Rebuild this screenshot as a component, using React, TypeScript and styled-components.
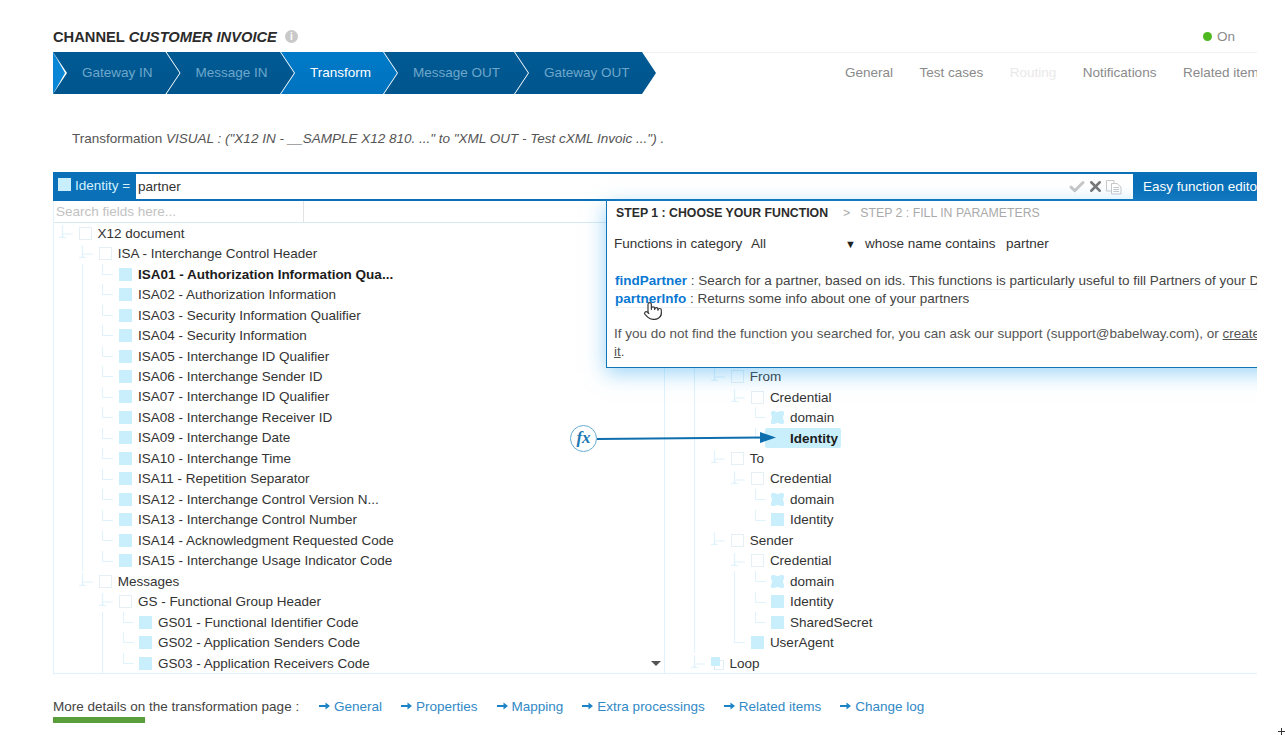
import React from "react";
import styled, { createGlobalStyle } from "styled-components";
import { Check, X, Pointer } from "lucide-react";

const GlobalStyle = createGlobalStyle`
  html, body {
    margin: 0;
    background: #fff;
    overflow: hidden;
  }
  body {
    font-family: "Liberation Sans", Arial, sans-serif;
    color: #333;
  }
`;

const ROW = 20.48;
const PALE = "#e0f2fc";
const CELL = "#c9effd";

const Page = styled.div`
  width: 1204px;
  height: 735px;
  margin-left: 53px;
  overflow: hidden;
`;

// header
const TitleBar = styled.div`
  display: flex;
  align-items: center;
  height: 52px;
  padding-top: 21px;
  box-sizing: border-box;
`;

const Title = styled.h1`
  margin: 0;
  font-size: 14.7px;
  font-weight: bold;
  color: #2b2b2b;
  line-height: 30px;

  em {
    font-weight: bold;
  }
`;

const InfoDot = styled.span`
  width: 13px;
  height: 13px;
  margin-left: 8px;
  border-radius: 50%;
  background: #c9c9c9;
  color: #fff;
  font-size: 10px;
  font-weight: bold;
  line-height: 13px;
  text-align: center;
`;

const Status = styled.div`
  display: flex;
  align-items: center;
  gap: 5px;
  margin-left: auto;
  margin-right: 22px;
  font-size: 13.5px;
  color: #8c8c8c;
`;

const StatusDot = styled.span`
  width: 9px;
  height: 9px;
  border-radius: 50%;
  background: #4fb81f;
`;

// steps
const NavRow = styled.div`
  display: flex;
  align-items: center;
  justify-content: space-between;
  height: 42px;
  box-shadow: inset 0 1px 0 #f1f1f1;
`;

const Steps = styled.div`
  display: flex;
  height: 42px;
`;

const StepTip = styled.div`
  width: 12px;
  margin-right: -12px;
  background: #0a86d6;
  clip-path: polygon(0 0, 100% 50%, 0 100%);
`;

const Step = styled.div<{ $w: number; $active?: boolean }>`
  width: ${({ $w }) => $w}px;
  margin-right: -13px;
  padding-left: 29px;
  box-sizing: border-box;
  font-size: 13.5px;
  line-height: 41px;
  white-space: nowrap;
  color: ${({ $active }) => ($active ? "#fff" : "#6ea7cb")};
  background: ${({ $active }) =>
    $active
      ? "linear-gradient(#007ac8, #0073bf)"
      : "linear-gradient(#005a94, #00558d)"};
  clip-path: polygon(
    0 0,
    calc(100% - 14px) 0,
    100% 50%,
    calc(100% - 14px) 100%,
    0 100%,
    14px 50%
  );
`;

const SideNav = styled.div`
  display: flex;
  gap: 26.5px;
  margin-top: -2px;
  font-size: 13.5px;
  color: #8a8a8a;
  width: 412px;
  white-space: nowrap;
  overflow: hidden;
`;

const SideLink = styled.span<{ $off?: boolean }>`
  color: ${({ $off }) => ($off ? "#e9e9e9" : "#8a8a8a")};
`;

const Summary = styled.p`
  margin: 36px 0 25px 19px;
  font-size: 13.5px;
  line-height: 17px;
  color: #555;
`;

// formula bar
const FormulaBar = styled.div`
  display: flex;
  height: 29px;
  background: #0a70b8;
  padding: 2px 0;
  box-sizing: border-box;
`;

const FieldTag = styled.div`
  display: flex;
  align-items: center;
  width: 83px;
  padding-left: 5px;
  box-sizing: border-box;
  gap: 4px;
  font-size: 13.5px;
  color: #d3f1fd;
  margin-top: -2px;
`;

const TagSquare = styled.span`
  width: 13px;
  height: 13px;
  margin-top: -2px;
  background: ${CELL};
`;

const FormulaInput = styled.div`
  display: flex;
  align-items: center;
  flex: 1;
  background: #fff;
  padding-left: 2px;
  font-size: 13.5px;
  color: #333;
`;

const InputTools = styled.div`
  display: flex;
  align-items: center;
  gap: 1px;
  margin-left: auto;
  margin-right: 10px;
`;

const EasyButton = styled.div`
  width: 124px;
  padding-left: 10px;
  box-sizing: border-box;
  font-size: 13.5px;
  line-height: 25px;
  color: #fff;
  white-space: nowrap;
  overflow: hidden;
`;

// mapping panel
const Panel = styled.div`
  position: relative;
  height: 473px;
  box-sizing: border-box;
  border-left: 1px solid ${PALE};
  border-bottom: 1px solid ${PALE};
`;

const SearchRow = styled.div`
  height: 22px;
  box-sizing: border-box;
  border-bottom: 1px solid #d9e8f1;
`;

const SearchBox = styled.div`
  width: 250px;
  height: 21px;
  padding-left: 2px;
  box-sizing: border-box;
  border-right: 1px solid #e3e3e3;
  font-size: 13.5px;
  line-height: 21px;
  color: #c2c2c2;
`;

const Panes = styled.div`
  display: flex;
  height: 450px;
  overflow: hidden;
`;

const LeftPane = styled.div`
  width: 610px;
  padding-left: 4px;
  box-sizing: border-box;
  flex-shrink: 0;
`;

const RightPane = styled.div`
  flex: 1;
  padding-left: 25px;
  /* first rows of this tree sit behind the function popup */
  padding-top: ${ROW * 7}px;
  box-sizing: border-box;
  border-left: 1px solid ${PALE};
`;

const Row = styled.div`
  display: flex;
  align-items: center;
  height: ${ROW}px;
  font-size: 13.5px;
  white-space: nowrap;
`;

const GuideCell = styled.span<{ $on: boolean }>`
  width: 20.2px;
  height: 100%;
  flex-shrink: 0;
  background: ${({ $on }) =>
    $on
      ? `linear-gradient(${PALE}, ${PALE}) 4px 0 / 1px 100% no-repeat`
      : "none"};
`;

const ConnectorSvg = styled.svg`
  width: 20.5px;
  height: ${ROW}px;
  flex-shrink: 0;
`;

const NodeBody = styled.span<{ $hl?: boolean; $bold?: boolean }>`
  display: flex;
  align-items: center;
  gap: 6px;
  height: 20px;
  margin-left: -6px;
  padding: 0 3px 0 6px;
  border-radius: 2px;
  background: ${({ $hl }) => ($hl ? CELL : "transparent")};
  font-weight: ${({ $bold }) => ($bold ? "bold" : "normal")};
  color: ${({ $bold }) => ($bold ? "#1c1c1c" : "#333")};
`;

const GroupBox = styled.span`
  width: 13px;
  height: 13px;
  box-sizing: border-box;
  border: 1px solid #e4eff6;
`;

const LeafBox = styled.span`
  width: 13px;
  height: 13px;
  background: ${CELL};
`;

const ScrollArrow = styled.span`
  position: absolute;
  left: 597px;
  bottom: 7px;
  border-left: 5px solid transparent;
  border-right: 5px solid transparent;
  border-top: 5px solid #555;
`;

// function popup
const Popup = styled.div`
  position: absolute;
  left: 552px;
  top: 0;
  width: 760px;
  height: 167px;
  box-sizing: border-box;
  padding: 4px 7px;
  background: #fff;
  border: 1.5px solid #1176b6;
  border-top: none;
  box-shadow: 0 5px 20px rgba(70, 175, 240, 0.55);
  font-size: 13.5px;
  color: #444;
  white-space: nowrap;
`;

const StepTitle = styled.div`
  display: flex;
  gap: 15px;
  padding-left: 2px;
  font-size: 12.3px;
  line-height: 17px;
  color: #aaa;

  b {
    color: #2b2b2b;
  }
`;

const StepNext = styled.span`
  margin-left: -5px;
`;

const FilterRow = styled.div`
  display: flex;
  margin-top: 14px;
  line-height: 16px;
  color: #555;
`;

const FilterValue = styled.span<{ $w: number }>`
  width: ${({ $w }) => $w}px;
  color: #333;
`;

const Caret = styled.span`
  width: 20px;
  font-size: 11px;
  color: #222;
`;

const FunctionList = styled.div`
  margin-top: 20px;
`;

const FunctionRow = styled.div`
  height: 18px;
  line-height: 17px;
  padding-left: 1px;
  border-bottom: 1px solid #f2f2f2;
  box-sizing: border-box;
  width: fit-content;

  b {
    color: #0a78d2;
  }
`;

const HelpText = styled.p`
  margin: 17px 0 0;
  line-height: 18px;
  color: #555;

  u {
    color: #555;
  }
`;

const HandCursor = styled(Pointer)`
  position: absolute;
  left: 36px;
  top: 100px;
  fill: #fff;
  color: #333;
`;

// fx link between trees
const FxBadge = styled.span`
  position: absolute;
  left: 516px;
  top: 224px;
  width: 27px;
  height: 27px;
  box-sizing: border-box;
  border: 1.5px solid #66abd3;
  border-radius: 50%;
  background: #fff;
  color: #1b79b3;
  font-family: "Liberation Serif", serif;
  font-size: 17px;
  font-style: italic;
  font-weight: bold;
  line-height: 23px;
  text-align: center;
`;

const LinkArrow = styled.svg`
  position: absolute;
  left: 543px;
  top: 228px;
`;

// footer
const FooterRow = styled.div`
  display: flex;
  align-items: center;
  height: 43px;
  padding-top: 21px;
  box-sizing: border-box;
  font-size: 13.5px;
  color: #444;
  white-space: nowrap;
`;

const FooterLabel = styled.span`
  width: 266px;
`;

const FooterLink = styled.span`
  display: flex;
  align-items: center;
  gap: 4px;
  margin-right: 19px;
  font-size: 13.5px;
  color: #3189c6;
`;

const GreenBar = styled.div`
  width: 92px;
  height: 6px;
  background: #5a9e3c;
`;

const CrossHair = styled.span`
  position: fixed;
  left: 1278px;
  top: 731px;
  width: 7px;
  height: 1px;
  background: #333;

  &::after {
    content: "";
    position: absolute;
    left: 3px;
    top: -3px;
    width: 1px;
    height: 7px;
    background: #333;
  }
`;

type Kind = "group" | "leaf" | "attr" | "multi";
type TreeNode = {
  level: number;
  kind: Kind;
  label: string;
  guides?: number[];
  bold?: boolean;
  hl?: boolean;
};

const isaFields = [
  "ISA01 - Authorization Information Qua...",
  "ISA02 - Authorization Information",
  "ISA03 - Security Information Qualifier",
  "ISA04 - Security Information",
  "ISA05 - Interchange ID Qualifier",
  "ISA06 - Interchange Sender ID",
  "ISA07 - Interchange ID Qualifier",
  "ISA08 - Interchange Receiver ID",
  "ISA09 - Interchange Date",
  "ISA10 - Interchange Time",
  "ISA11 - Repetition Separator",
  "ISA12 - Interchange Control Version N...",
  "ISA13 - Interchange Control Number",
  "ISA14 - Acknowledgment Requested Code",
  "ISA15 - Interchange Usage Indicator Code",
];

const leftTree: TreeNode[] = [
  { level: 0, kind: "group", label: "X12 document" },
  { level: 1, kind: "group", label: "ISA - Interchange Control Header" },
  ...isaFields.map((label, i) => ({
    level: 2,
    kind: "leaf" as Kind,
    label,
    guides: [1],
    bold: i === 0,
  })),
  { level: 1, kind: "group", label: "Messages" },
  { level: 2, kind: "group", label: "GS - Functional Group Header" },
  { level: 3, kind: "leaf", label: "GS01 - Functional Identifier Code", guides: [2] },
  { level: 3, kind: "leaf", label: "GS02 - Application Senders Code", guides: [2] },
  { level: 3, kind: "leaf", label: "GS03 - Application Receivers Code", guides: [2] },
];

const rightTree: TreeNode[] = [
  { level: 1, kind: "group", label: "From", guides: [0] },
  { level: 2, kind: "group", label: "Credential", guides: [0] },
  { level: 3, kind: "attr", label: "domain", guides: [0] },
  { level: 3, kind: "leaf", label: "Identity", guides: [0], bold: true, hl: true },
  { level: 1, kind: "group", label: "To", guides: [0] },
  { level: 2, kind: "group", label: "Credential", guides: [0] },
  { level: 3, kind: "attr", label: "domain", guides: [0] },
  { level: 3, kind: "leaf", label: "Identity", guides: [0] },
  { level: 1, kind: "group", label: "Sender", guides: [0] },
  { level: 2, kind: "group", label: "Credential", guides: [0, 2] },
  { level: 3, kind: "attr", label: "domain", guides: [0, 2] },
  { level: 3, kind: "leaf", label: "Identity", guides: [0, 2] },
  { level: 3, kind: "leaf", label: "SharedSecret", guides: [0, 2] },
  { level: 2, kind: "leaf", label: "UserAgent", guides: [0] },
  { level: 0, kind: "multi", label: "Loop" },
];

const steps = [
  { label: "Gateway IN", w: 126.5 },
  { label: "Message IN", w: 127.5 },
  { label: "Transform", w: 116 },
  { label: "Message OUT", w: 144 },
  { label: "Gateway OUT", w: 141 },
];

const footerLinks = [
  "General",
  "Properties",
  "Mapping",
  "Extra processings",
  "Related items",
  "Change log",
];

const Connector = ({ kind }: { kind: Kind }) => (
  <ConnectorSvg viewBox="0 0 20.5 20.48" fill="none" stroke={PALE}>
    {kind === "group" || kind === "multi" ? (
      <>
        <path d="M4.5 2.5V14.5M1 14.5H8M4.5 11H15" strokeWidth="1.2" />
        <path d="M3.5 12.5h2v2h-2z" fill={PALE} stroke="none" />
      </>
    ) : (
      <path d="M4.5 0V10.5H15" />
    )}
  </ConnectorSvg>
);

const AttrIcon = () => (
  <svg width="13" height="13" viewBox="0 0 13 13">
    <path
      d="M0 1.5Q0 0 1.5 0H3.5Q6.5 2 9.5 0H11.5Q13 0 13 1.5V3.5Q11 6.5 13 9.5V11.5Q13 13 11.5 13H9.5Q6.5 11 3.5 13H1.5Q0 13 0 11.5V9.5Q2 6.5 0 3.5Z"
      fill={CELL}
    />
  </svg>
);

const MultiIcon = () => (
  <svg width="13" height="13" viewBox="0 0 13 13">
    <rect x="3.5" y="3.5" width="9" height="9" fill="#fff" stroke="#e0eef7" />
    <rect x="0" y="0" width="9" height="9" fill={CELL} />
  </svg>
);

const NodeIcon = ({ kind }: { kind: Kind }) => {
  if (kind === "group") return <GroupBox />;
  if (kind === "leaf") return <LeafBox />;
  if (kind === "attr") return <AttrIcon />;
  return <MultiIcon />;
};

const Tree = ({ nodes }: { nodes: TreeNode[] }) => (
  <>
    {nodes.map((node, i) => (
      <Row key={i}>
        {Array.from({ length: node.level }).map((_, c) => (
          <GuideCell key={c} $on={(node.guides || []).includes(c)} />
        ))}
        <Connector kind={node.kind} />
        <NodeBody $hl={node.hl} $bold={node.bold}>
          <NodeIcon kind={node.kind} />
          {node.label}
        </NodeBody>
      </Row>
    ))}
  </>
);

const CopyIcon = () => (
  <svg width="18" height="16" viewBox="0 0 18 16" fill="#fff" stroke="#c9c9c9">
    <path d="M1.5 1.5H9V12H1.5Z" />
    <path d="M6.5 4.5H12L16 8V15H6.5Z" />
    <path d="M8.5 8.5H14M8.5 10.5H14M8.5 12.5H14" />
  </svg>
);

const LinkGlyph = () => (
  <svg width="11" height="8" viewBox="0 0 11 8">
    <path d="M0 3H6.5V0.5L11 4L6.5 7.5V5H0Z" fill="#1b83c6" />
  </svg>
);

export default function App() {
  return (
    <Page>
      <GlobalStyle />
      <TitleBar>
        <Title>
          CHANNEL <em>CUSTOMER INVOICE</em>
        </Title>
        <InfoDot>i</InfoDot>
        <Status>
          <StatusDot />
          On
        </Status>
      </TitleBar>

      <NavRow>
        <Steps>
          <StepTip />
          {steps.map((s, i) => (
            <Step key={s.label} $w={s.w} $active={i === 2}>
              {s.label}
            </Step>
          ))}
        </Steps>
        <SideNav>
          <SideLink>General</SideLink>
          <SideLink>Test cases</SideLink>
          <SideLink $off>Routing</SideLink>
          <SideLink>Notifications</SideLink>
          <SideLink>Related items</SideLink>
        </SideNav>
      </NavRow>

      <Summary>
        Transformation{" "}
        <i>
          VISUAL : ("X12 IN - __SAMPLE X12 810. ..." to "XML OUT - Test cXML
          Invoic ...") .
        </i>
      </Summary>

      <FormulaBar>
        <FieldTag>
          <TagSquare />
          Identity =
        </FieldTag>
        <FormulaInput>
          partner
          <InputTools>
            <Check size={18} strokeWidth={4} color="#c6c6c6" />
            <X size={17} strokeWidth={3.5} color="#777" />
            <CopyIcon />
          </InputTools>
        </FormulaInput>
        <EasyButton>Easy function editor</EasyButton>
      </FormulaBar>

      <Panel>
        <SearchRow>
          <SearchBox>Search fields here...</SearchBox>
        </SearchRow>
        <Panes>
          <LeftPane>
            <Tree nodes={leftTree} />
          </LeftPane>
          <RightPane>
            <Tree nodes={rightTree} />
          </RightPane>
        </Panes>
        <ScrollArrow />

        <FxBadge>fx</FxBadge>
        <LinkArrow width="190" height="18" viewBox="0 0 190 18">
          <path d="M0 10L165 8.5" stroke="#0f6fae" strokeWidth="2" fill="none" />
          <path d="M163 3L179 8.5L163 14Z" fill="#0f6fae" />
        </LinkArrow>

        <Popup>
          <StepTitle>
            <b>STEP 1 : CHOOSE YOUR FUNCTION</b>
            <span>&gt;</span>
            <StepNext>STEP 2 : FILL IN PARAMETERS</StepNext>
          </StepTitle>
          <FilterRow>
            <FilterValue $w={137}>Functions in category</FilterValue>
            <FilterValue $w={94}>All</FilterValue>
            <Caret>▼</Caret>
            <FilterValue $w={141}>whose name contains</FilterValue>
            <FilterValue $w={60}>partner</FilterValue>
          </FilterRow>
          <FunctionList>
            <FunctionRow>
              <b>findPartner</b> : Search for a partner, based on ids. This
              functions is particularly useful to fill Partners of your Documents
            </FunctionRow>
            <FunctionRow>
              <b>partnerInfo</b> : Returns some info about one of your partners
            </FunctionRow>
          </FunctionList>
          <HelpText>
            If you do not find the function you searched for, you can ask our
            support (support@babelway.com), or <u>create</u>
            <br />
            <u>it</u>.
          </HelpText>
          <HandCursor size={20} strokeWidth={1.4} />
        </Popup>
      </Panel>

      <FooterRow>
        <FooterLabel>More details on the transformation page :</FooterLabel>
        {footerLinks.map((l) => (
          <FooterLink key={l}>
            <LinkGlyph />
            {l}
          </FooterLink>
        ))}
      </FooterRow>
      <GreenBar />
      <CrossHair />
    </Page>
  );
}
